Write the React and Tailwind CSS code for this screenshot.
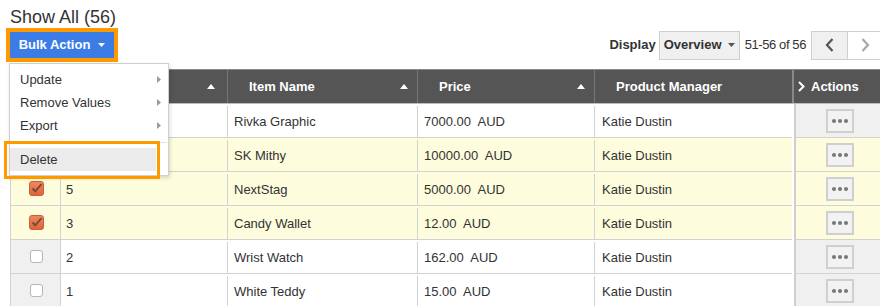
import React from 'react';

const rows = [
  { id: '9', name: 'Rivka Graphic', price: '7000.00  AUD', pm: 'Katie Dustin', sel: false },
  { id: '8', name: 'SK Mithy', price: '10000.00  AUD', pm: 'Katie Dustin', sel: true },
  { id: '5', name: 'NextStag', price: '5000.00  AUD', pm: 'Katie Dustin', sel: true },
  { id: '3', name: 'Candy Wallet', price: '12.00  AUD', pm: 'Katie Dustin', sel: true },
  { id: '2', name: 'Wrist Watch', price: '162.00  AUD', pm: 'Katie Dustin', sel: false },
  { id: '1', name: 'White Teddy', price: '15.00  AUD', pm: 'Katie Dustin', sel: false },
];

function SortCaret() {
  return (
    <svg width="8" height="5" viewBox="0 0 8 5" className="shrink-0">
      <path d="M0 5 L4 0 L8 5 Z" fill="#fff" />
    </svg>
  );
}

function SubArrow() {
  return (
    <svg width="4" height="7" viewBox="0 0 4 7">
      <path d="M0 0 L4 3.5 L0 7 Z" fill="#9a9a9a" />
    </svg>
  );
}

function Checkbox({ checked }) {
  if (checked) {
    return (
      <svg width="15" height="15" viewBox="0 0 15 15">
        <defs>
          <linearGradient id="cbg" x1="0" y1="0" x2="0" y2="1">
            <stop offset="0" stopColor="#f08a5e" />
            <stop offset="1" stopColor="#e0613a" />
          </linearGradient>
        </defs>
        <rect x="0.5" y="0.5" width="14" height="14" rx="2.5" fill="url(#cbg)" stroke="#c9603b" />
        <path d="M3.5 7.5 L6.3 10.3 L12.5 3.2" fill="none" stroke="#7a4a3c" strokeWidth="2" />
      </svg>
    );
  }
  return <div className="h-[13px] w-[13px] rounded-[3px] border border-[#b5b5b5] bg-white" />;
}

function DotsButton() {
  return (
    <div className="flex h-[24px] w-[28px] items-center justify-center gap-[2px] border-2 border-[#cfcfcf] bg-[#f2f2f2]">
      <span className="h-[4px] w-[4px] rounded-full bg-[#777]" />
      <span className="h-[4px] w-[4px] rounded-full bg-[#777]" />
      <span className="h-[4px] w-[4px] rounded-full bg-[#777]" />
    </div>
  );
}

export default function App() {
  return (
    <div className="relative h-[306px] w-[880px] overflow-hidden bg-white font-['Liberation_Sans',Arial,sans-serif] text-[13px] text-[#333]">
      <div className="pl-[10px] pt-[6px] text-[18px] leading-[22px] text-[#333]">Show All (56)</div>

      <div className="flex h-[34px] items-center">
        <div className="ml-[6px] flex h-[34px] w-[112px] items-center justify-center gap-[8px] border-4 border-[#ff9900] bg-[#3b7ce6] font-bold text-white">
          <span>Bulk Action</span>
          <svg width="7" height="4" viewBox="0 0 7 4">
            <path d="M0 0 L7 0 L3.5 4 Z" fill="#fff" />
          </svg>
        </div>
        <div className="-mr-[4px] ml-auto flex items-center">
          <span className="mr-[3px] font-bold">Display</span>
          <div className="flex h-[29px] w-[81px] items-center justify-center gap-[6px] border border-[#cfcfcf] bg-[#f0f0f0] font-bold">
            <span>Overview</span>
            <svg width="7" height="4" viewBox="0 0 7 4">
              <path d="M0 0 L7 0 L3.5 4 Z" fill="#555" />
            </svg>
          </div>
          <span className="ml-[5px] mr-[5px] tracking-[-0.4px]">51-56 of 56</span>
          <div className="flex h-[29px] w-[37px] items-center justify-center border border-[#cfcfcf] bg-[#f0f0f0]">
            <svg width="9" height="14" viewBox="0 0 9 14">
              <path d="M7.5 1 L2 7 L7.5 13" fill="none" stroke="#555" strokeWidth="2.2" />
            </svg>
          </div>
          <div className="flex h-[29px] w-[36px] items-center justify-center border border-l-0 border-[#cfcfcf] bg-white">
            <svg width="9" height="14" viewBox="0 0 9 14">
              <path d="M1.5 1 L7 7 L1.5 13" fill="none" stroke="#a8a8a8" strokeWidth="2.2" />
            </svg>
          </div>
        </div>
      </div>

      <div className="ml-[10px] mt-[7px]">
        <div className="flex h-[35px] border-y border-b-[#bcbcbc] border-t-[#8a8a8a] bg-[#555] font-bold text-white">
          <div className="w-[51px] border-r border-[#777]" />
          <div className="flex w-[167px] items-center justify-end border-r border-[#777] pr-[12px]">
            <SortCaret />
          </div>
          <div className="flex w-[190px] items-center justify-between border-r border-[#777] pl-[21px] pr-[9px]">
            <span>Item Name</span>
            <SortCaret />
          </div>
          <div className="flex w-[177px] items-center justify-between border-r border-[#777] pl-[21px] pr-[9px]">
            <span>Price</span>
            <SortCaret />
          </div>
          <div className="flex w-[199px] items-center border-r-2 border-[#8a8a8a] pl-[21px]">
            <span>Product Manager</span>
          </div>
          <div className="flex flex-1 items-center gap-[6px] pl-[4px]">
            <svg width="7" height="11" viewBox="0 0 7 11">
              <path d="M1 1 L5.5 5.5 L1 10" fill="none" stroke="#fff" strokeWidth="2" />
            </svg>
            <span>Actions</span>
          </div>
        </div>

        {rows.map((r) => (
          <div key={r.name} className="flex h-[34px]">
            <div
              className={`flex w-[782px] border-b border-l border-[#d2d2d2] pt-[2px] ${r.sel ? 'bg-[#fdfcdc]' : 'bg-white'}`}
            >
              <div
                className={`-mt-[2px] flex w-[50px] items-center justify-center border-r border-[#d2d2d2] pl-[2px] ${r.sel ? '' : 'bg-[#f0f0f0]'}`}
              >
                <Checkbox checked={r.sel} />
              </div>
              <div className="flex w-[167px] items-center border-r border-[#d2d2d2] pl-[5px]">{r.id}</div>
              <div className="flex w-[190px] items-center border-r border-[#d2d2d2] pl-[6px]">{r.name}</div>
              <div className="flex w-[177px] items-center whitespace-pre border-r border-[#d2d2d2] pl-[6px]">
                {r.price}
              </div>
              <div className="flex flex-1 items-center pl-[7px]">{r.pm}</div>
            </div>
            <div className="w-[2px]" />
            <div
              className={`flex flex-1 items-center justify-center border-b border-l-2 border-b-[#d2d2d2] border-l-[#cfcfcf] pl-[4px] ${r.sel ? 'bg-[#fdfcdc]' : 'bg-[#f0f0f0]'}`}
            >
              <DotsButton />
            </div>
          </div>
        ))}
      </div>

      <div className="absolute left-[9px] top-[63px] w-[160px] border border-[#d0d0d0] bg-white pb-[4px] pt-[4px] shadow-[1px_2px_4px_rgba(0,0,0,0.15)]">
        {['Update', 'Remove Values', 'Export'].map((t) => (
          <div key={t} className="flex h-[23px] items-center justify-between pl-[10px] pr-[7px]">
            <span>{t}</span>
            <SubArrow />
          </div>
        ))}
        <div className="mx-[1px] my-[5px] h-px bg-[#e2e2e2]" />
        <div className="flex h-[23px] w-[146px] items-center bg-[#ebebeb] pl-[10px]">Delete</div>
      </div>

      <div className="pointer-events-none absolute left-[4px] top-[141px] h-[38px] w-[156px] border-[3px] border-[#ff9900]" />
    </div>
  );
}
